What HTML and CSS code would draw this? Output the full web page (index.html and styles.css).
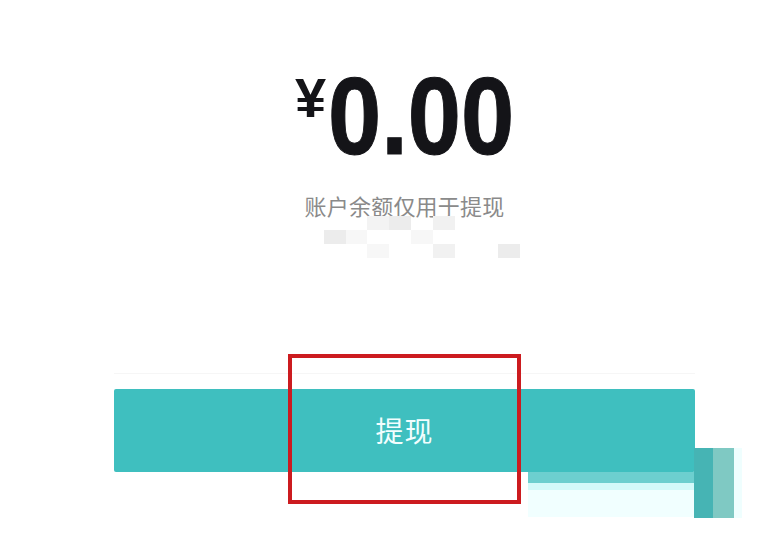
FILE: index.html
```html
<!DOCTYPE html>
<html lang="zh-CN">
<head>
<meta charset="utf-8">
<title>账户余额</title>
<link rel="stylesheet" href="styles.css">
</head>
<body>
<main class="page">
  <section class="balance">
    <div class="amount"><span class="currency">¥</span><span class="value">0.00</span></div>
    <p class="note">账户余额仅用于提现</p>
    <div class="mosaic">
      <i></i><i></i><i></i><i class="m1"></i><i class="m2"></i><i></i><i class="m3"></i><i></i><i></i><i></i>
      <i></i><i class="m2"></i><i class="m4"></i><i></i><i></i><i class="m4"></i><i></i><i></i><i></i><i></i>
      <i></i><i></i><i></i><i class="m4"></i><i></i><i></i><i class="m3"></i><i></i><i></i><i class="m2"></i>
    </div>
  </section>
  <div class="divider"></div>
  <button class="withdraw" type="button">提现</button>
</main>
<div class="highlight"></div>
<div class="glitch">
  <div class="strip"></div>
  <div class="haze"></div>
  <div class="block-dark"></div>
  <div class="block-light"></div>
  <div class="block-haze"></div>
</div>
</body>
</html>
```

FILE: styles.css
```css
html, body {
  margin: 0;
  padding: 0;
  background: #ffffff;
}

body {
  width: 764px;
  height: 533px;
  overflow: hidden;
  position: relative;
  font-family: "Noto Sans CJK SC", "Noto Sans", sans-serif;
}

.page {
  margin-left: 114px;
  width: 581px;
  padding-top: 61px;
  display: flex;
  flex-direction: column;
}

.balance {
  display: flex;
  flex-direction: column;
  align-items: center;
}

.amount {
  display: flex;
  align-items: flex-start;
  color: #141418;
  font-family: "Liberation Sans", Arial, sans-serif;
  font-weight: 700;
}

.currency {
  font-size: 56px;
  line-height: 56px;
  margin-top: 9px;
  margin-right: 2px;
}

.value {
  display: inline-block;
  font-size: 110px;
  line-height: 110px;
  transform: scaleX(0.87);
  transform-origin: left top;
  margin-right: -28px;
  -webkit-text-stroke: 1px #141418;
}

.note {
  margin: 23px 0 0;
  font-size: 22px;
  line-height: 22px;
  letter-spacing: 0.2px;
  color: #8a8a8a;
}

.mosaic {
  align-self: flex-start;
  margin-left: 188px;
  display: grid;
  grid-template-columns: repeat(10, 21.8px);
  grid-auto-rows: 14px;
}

.mosaic i {
  display: block;
}

.mosaic .m1 { background: #f3f3f3; }
.mosaic .m2 { background: #ececec; }
.mosaic .m3 { background: #f1f1f1; }
.mosaic .m4 { background: #f7f7f7; }

.divider {
  margin-top: 115px;
  height: 1px;
  background: #f6f6f6;
}

.withdraw {
  margin-top: 15px;
  height: 83px;
  border: none;
  border-radius: 2px;
  background: #3fbfbf;
  color: #f2fefe;
  font-family: "Noto Sans CJK SC", "Noto Sans", sans-serif;
  font-size: 28px;
  line-height: 83px;
  padding: 0;
  letter-spacing: 1px;
}

.highlight {
  position: absolute;
  left: 288px;
  top: 354px;
  width: 225px;
  height: 142px;
  border: 4px solid #cc1b1f;
}

.glitch div {
  position: absolute;
}

.glitch .strip {
  left: 528px;
  top: 472px;
  width: 167px;
  height: 11px;
  background: #6dcfcf;
}

.glitch .haze {
  left: 528px;
  top: 483px;
  width: 166px;
  height: 34px;
  background: linear-gradient(#d4fafa 0, #d4fafa 7px, #f1ffff 7px);
}

.glitch .block-dark {
  left: 694px;
  top: 448px;
  width: 19px;
  height: 70px;
  background: #46b4b4;
}

.glitch .block-light {
  left: 713px;
  top: 448px;
  width: 21px;
  height: 70px;
  background: #7fc9c3;
}

.glitch .block-haze {
  left: 734px;
  top: 448px;
  width: 8px;
  height: 70px;
  background: #effefe;
}
```
